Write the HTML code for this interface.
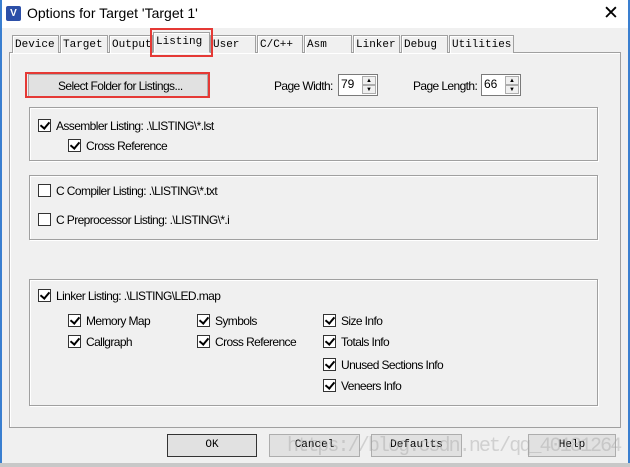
<!DOCTYPE html><html><head><style>
*{margin:0;padding:0;box-sizing:border-box}
body{width:630px;height:467px;background:#f0f0f0;position:relative;overflow:hidden;font-family:"Liberation Sans",Arial,sans-serif;font-size:12px;color:#000}
.a{position:absolute}
.title{left:0;top:0;width:630px;height:28px;background:#fff}
.grp{position:absolute;border:1px solid #a0a0a0;box-shadow:1px 1px 0 #fff, inset 1px 1px 0 #fff}
.cb{position:absolute;width:13px;height:13px;border:1px solid #333;background:#fff}
.cb.c::after{content:"";position:absolute;left:3px;top:0px;width:4px;height:7px;border:solid #000;border-width:0 2px 2px 0;transform:rotate(40deg)}
.t{position:absolute;white-space:nowrap;letter-spacing:-0.6px}
.tab{position:absolute;top:35px;height:18px;border:1px solid #a0a0a0;border-bottom:none;background:#f0f0f0;font-family:"Liberation Mono",monospace;font-size:11px;padding:3px 0 0 2px;box-shadow:inset 1px 1px 0 #fff;overflow:hidden;white-space:nowrap}
.btn{position:absolute;top:434px;height:23px;border:1px solid #adadad;background:#e1e1e1;font-family:"Liberation Mono",monospace;font-size:11px;text-align:center;line-height:21px}
.spin{position:absolute;width:40px;height:22px;border:1px solid #7a7a7a;background:#fff}
.spin span{position:absolute;left:2px;top:2px;font-size:12px}
.spin i{position:absolute;right:1px;width:14px;height:9px;border:1px solid #adadad;background:#f0f0f0;font-size:6px;font-style:normal;text-align:center;line-height:8px}
.red{position:absolute;border:2px solid #e53935}
</style></head><body>
<div class="a title"></div>
<div class="a" style="left:0;top:0;width:2px;height:467px;background:#3a7fd0"></div>
<div class="a" style="left:628px;top:0;width:2px;height:467px;background:#3a7fd0"></div>
<div class="a" style="left:6px;top:6px;width:15px;height:15px;background:#2c4fa8;border-radius:2px;color:#fff;font-size:10px;text-align:center;line-height:15px;font-weight:bold">V</div>
<div class="t" style="left:27px;top:5px;font-size:14px;letter-spacing:0">Options for Target 'Target 1'</div>
<div class="t" style="left:603px;top:2px;font-size:19px;letter-spacing:0">✕</div>

<div class="a" style="left:9px;top:52px;width:612px;height:376px;border:1px solid #a0a0a0;box-shadow:inset 1px 1px 0 #fff"></div>
<div class="tab" style="left:12px;width:47px">Device</div>
<div class="tab" style="left:60px;width:48px">Target</div>
<div class="tab" style="left:109px;width:44px">Output</div>
<div class="tab" style="left:153px;top:32px;height:21px;width:57px;border-bottom:1px solid #f0f0f0">Listing</div>
<div class="tab" style="left:210px;width:46px">User</div>
<div class="tab" style="left:257px;width:46px">C/C++</div>
<div class="tab" style="left:304px;width:48px">Asm</div>
<div class="tab" style="left:353px;width:47px">Linker</div>
<div class="tab" style="left:401px;width:47px">Debug</div>
<div class="tab" style="left:449px;width:65px">Utilities</div>
<div class="red" style="left:150px;top:28px;width:63px;height:29px"></div>

<div class="a" style="left:28px;top:74px;width:180px;height:23px;border:1px solid #adadad;background:#e1e1e1"></div>
<div class="t" style="left:58px;top:79px">Select Folder for Listings...</div>
<div class="red" style="left:25px;top:72px;width:185px;height:26px"></div>
<div class="t" style="left:274px;top:79px">Page Width:</div>
<div class="spin" style="left:338px;top:74px"><span>79</span><i style="top:1px">▲</i><i style="top:10px">▼</i></div>
<div class="t" style="left:413px;top:79px">Page Length:</div>
<div class="spin" style="left:481px;top:74px"><span>66</span><i style="top:1px">▲</i><i style="top:10px">▼</i></div>

<div class="grp" style="left:29px;top:107px;width:569px;height:54px"></div>
<div class="cb c" style="left:38px;top:119px"></div><div class="t" style="left:56px;top:119px">Assembler Listing:  .\LISTING\*.lst</div>
<div class="cb c" style="left:68px;top:139px"></div><div class="t" style="left:86px;top:139px">Cross Reference</div>

<div class="grp" style="left:29px;top:175px;width:569px;height:65px"></div>
<div class="cb" style="left:38px;top:184px"></div><div class="t" style="left:56px;top:184px">C Compiler Listing:  .\LISTING\*.txt</div>
<div class="cb" style="left:38px;top:213px"></div><div class="t" style="left:56px;top:213px">C Preprocessor Listing:  .\LISTING\*.i</div>

<div class="grp" style="left:29px;top:279px;width:569px;height:127px"></div>
<div class="cb c" style="left:38px;top:289px"></div><div class="t" style="left:56px;top:289px">Linker Listing:  .\LISTING\LED.map</div>
<div class="cb c" style="left:68px;top:314px"></div><div class="t" style="left:86px;top:314px">Memory Map</div>
<div class="cb c" style="left:68px;top:335px"></div><div class="t" style="left:86px;top:335px">Callgraph</div>
<div class="cb c" style="left:197px;top:314px"></div><div class="t" style="left:215px;top:314px">Symbols</div>
<div class="cb c" style="left:197px;top:335px"></div><div class="t" style="left:215px;top:335px">Cross Reference</div>
<div class="cb c" style="left:323px;top:314px"></div><div class="t" style="left:341px;top:314px">Size Info</div>
<div class="cb c" style="left:323px;top:335px"></div><div class="t" style="left:341px;top:335px">Totals Info</div>
<div class="cb c" style="left:323px;top:358px"></div><div class="t" style="left:341px;top:358px">Unused Sections Info</div>
<div class="cb c" style="left:323px;top:379px"></div><div class="t" style="left:341px;top:379px">Veneers Info</div>

<div class="btn" style="left:167px;width:90px;border:1px solid #333">OK</div>
<div class="btn" style="left:269px;width:91px">Cancel</div>
<div class="btn" style="left:371px;width:91px">Defaults</div>
<div class="btn" style="left:528px;width:88px">Help</div>
<div class="t" style="left:287px;top:435px;font-size:20px;color:rgba(160,160,160,0.4);font-family:'Liberation Mono',monospace;letter-spacing:-1.9px">https://blog.csdn.net/qq_40181264</div>
<div class="a" style="left:0;top:463px;width:630px;height:4px;background:#c8c8c8"></div>
</body></html>
